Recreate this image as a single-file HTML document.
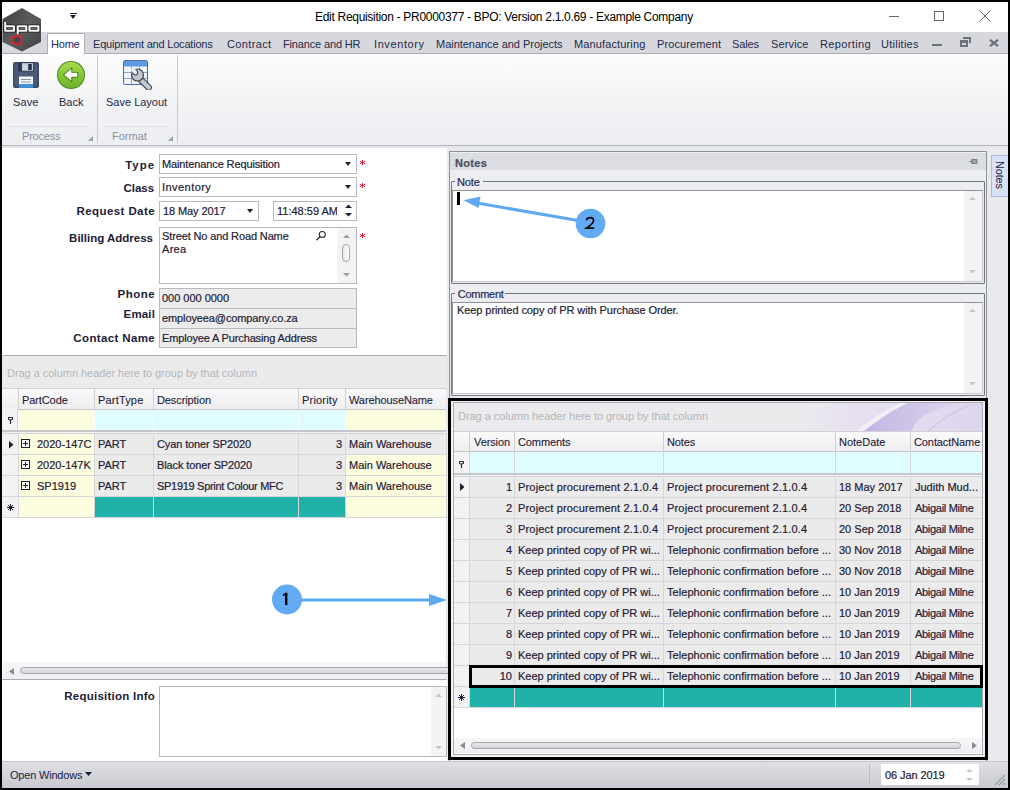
<!DOCTYPE html>
<html><head><meta charset="utf-8">
<style>
*{margin:0;padding:0;box-sizing:border-box}
html,body{width:1010px;height:790px;overflow:hidden;background:#000}
body{position:relative;font-family:"Liberation Sans",sans-serif;font-size:11px;color:#1e2034}
.a{position:absolute}
.t{position:absolute;white-space:nowrap;line-height:1;-webkit-text-stroke:0.2px}
.seg{font-size:11px;letter-spacing:-0.2px;color:#1e2a4a;-webkit-text-stroke:0}
.ns{-webkit-text-stroke:0}
.lbl{position:absolute;white-space:nowrap;line-height:1;font-weight:bold;font-size:11.5px;text-align:right;color:#1c2036}
.inp{position:absolute;background:#fff;border:1px solid #b7b9be}
.inp.ro{background:#ececed}
.itx{position:absolute;white-space:nowrap;line-height:1;font-size:11px;color:#1e2034;-webkit-text-stroke:0.2px}
.dd{position:absolute;width:0;height:0;border-left:3.5px solid transparent;border-right:3.5px solid transparent;border-top:4px solid #1e2034}
.req{position:absolute}
.gc{position:absolute;border-right:1px solid #d4d5d8;border-bottom:1px solid #d4d5d8}
.hd{position:absolute;white-space:nowrap;line-height:1;font-size:11px;letter-spacing:-0.1px;color:#1e2034;-webkit-text-stroke:0.1px}
</style></head><body>
<div class="a" style="left:2px;top:2px;width:1006px;height:786px;background:#e9eaed"></div>

<!-- ============ title bar ============ -->
<div class="a" style="left:2px;top:2px;width:1006px;height:30px;background:#fff"></div>
<div class="t ns" style="left:315px;top:11px;font-size:12px;letter-spacing:-0.3px;color:#000">Edit Requisition - PR0000377 - BPO: Version 2.1.0.69 - Example Company</div>
<div class="a" style="left:70px;top:13px;width:7px;height:1px;background:#1a1a3a"></div>
<div class="a" style="left:70px;top:15px;width:0;height:0;border-left:3.5px solid transparent;border-right:3.5px solid transparent;border-top:4px solid #1a1a3a"></div>
<div class="a" style="left:889px;top:16px;width:10px;height:1px;background:#666"></div>
<div class="a" style="left:934px;top:11px;width:10px;height:10px;border:1px solid #666"></div>
<svg class="a" style="left:979px;top:10px" width="12" height="12"><path d="M0.5 0.5L11.5 11.5M11.5 0.5L0.5 11.5" stroke="#666" stroke-width="1"/></svg>

<!-- ============ tab bar ============ -->
<div class="a" style="left:2px;top:32px;width:1006px;height:21px;background:#d7d8dd"></div>
<div class="a" style="left:2px;top:53px;width:1006px;height:1px;background:#a9abb1"></div>
<div class="a" style="left:47px;top:33px;width:38px;height:22px;background:#fff;border:1px solid #aeb0b6;border-bottom:none"></div>
<div class="t seg" style="left:51px;top:39px;letter-spacing:-0.2px;color:#20286a">Home</div>
<div class="t seg" style="left:93px;top:39px;letter-spacing:-0.2px">Equipment and Locations</div>
<div class="t seg" style="left:227px;top:39px;letter-spacing:0.37px">Contract</div>
<div class="t seg" style="left:283px;top:39px;letter-spacing:-0.15px">Finance and HR</div>
<div class="t seg" style="left:374px;top:39px;letter-spacing:0.6px">Inventory</div>
<div class="t seg" style="left:436px;top:39px;letter-spacing:-0.03px">Maintenance and Projects</div>
<div class="t seg" style="left:574px;top:39px;letter-spacing:0.13px">Manufacturing</div>
<div class="t seg" style="left:657px;top:39px;letter-spacing:0.1px">Procurement</div>
<div class="t seg" style="left:732px;top:39px;letter-spacing:-0.1px">Sales</div>
<div class="t seg" style="left:771px;top:39px;letter-spacing:0.13px">Service</div>
<div class="t seg" style="left:820px;top:39px;letter-spacing:0.36px">Reporting</div>
<div class="t seg" style="left:881px;top:39px;letter-spacing:0.25px">Utilities</div>
<div class="a" style="left:932px;top:43.5px;width:10px;height:2.5px;background:#6d7079"></div>
<svg class="a" style="left:960px;top:37px" width="11" height="10"><path d="M3 0h8v6h-2v-4h-6z M0 3h8v7h-8z" fill="#6d7079"/><path d="M2 6h4v2h-4z" fill="#d6d7dc"/></svg>
<svg class="a" style="left:989px;top:38.5px" width="10" height="8"><path d="M1 0.8L9 7.2M9 0.8L1 7.2" stroke="#6d7079" stroke-width="2.2"/></svg>

<!-- logo -->
<svg class="a" style="left:1px;top:7px" width="42" height="46" viewBox="0 0 42 46">
 <defs><linearGradient id="lg" x1="0" y1="0" x2="1" y2="1"><stop offset="0" stop-color="#3e3e3e"/><stop offset="0.5" stop-color="#5c5c5c"/><stop offset="1" stop-color="#424242"/></linearGradient></defs>
 <polygon points="21,1 40,12 40,35 21,44.5 1.5,35 1.5,12" fill="url(#lg)"/>
 <g fill="none" stroke="#1c1c1c" stroke-width="3.8" stroke-linejoin="round">
  <path d="M4.2 15V23.7H13V19.3H4.2"/><path d="M16.7 27.6V19.3H25.3V23.7H16.7"/><rect x="28.5" y="19.3" width="8.9" height="4.4"/>
 </g>
 <g fill="none" stroke="#fafafa" stroke-width="2.1" stroke-linejoin="round">
  <path d="M4.2 15V23.7H13V19.3H4.2"/><path d="M16.7 27.6V19.3H25.3V23.7H16.7"/><rect x="28.5" y="19.3" width="8.9" height="4.4"/>
 </g>
 <path d="M6.5 21.5h5M19 21.5h5M30.5 21.5h5" stroke="#777" stroke-width="0.8"/>
 <polygon points="16,28.2 20.3,30.6 20.3,35.4 16,37.8 11.7,35.4 11.7,30.6" fill="#3d4a4a" stroke="#e3202b" stroke-width="1.8"/>
</svg>
<!-- ============ ribbon ============ -->
<div class="a" style="left:2px;top:54px;width:1006px;height:91px;background:linear-gradient(#fdfdfe,#f1f2f4 60%,#eceef1)"></div>
<div class="a" style="left:2px;top:145px;width:1006px;height:1px;background:#b3b5bb"></div>
<div class="a" style="left:2px;top:146px;width:1006px;height:2px;background:#e6e7ea"></div>
<div class="a" style="left:97px;top:55px;width:1px;height:88px;background:#c9cbd0"></div>
<div class="a" style="left:177px;top:55px;width:1px;height:88px;background:#c9cbd0"></div>
<div class="a" style="left:7px;top:126px;width:82px;height:1px;background:#e0e2e6"></div>
<div class="a" style="left:104px;top:126px;width:66px;height:1px;background:#e0e2e6"></div>
<div class="t seg" style="left:13px;top:97px;letter-spacing:0.1px">Save</div>
<div class="t seg" style="left:59px;top:97px;letter-spacing:0px">Back</div>
<div class="t seg" style="left:106px;top:97px;letter-spacing:0px">Save Layout</div>
<div class="t seg" style="left:22px;top:131px;color:#8b91a0">Process</div>
<div class="t seg" style="left:112px;top:131px;color:#8b91a0;letter-spacing:0px">Format</div>
<svg class="a" style="left:88px;top:136px" width="5" height="5"><path d="M5 0V5H0z" fill="#9a9ea8"/></svg>
<svg class="a" style="left:168px;top:136px" width="5" height="5"><path d="M5 0V5H0z" fill="#9a9ea8"/></svg>

<!-- save icon -->
<svg class="a" style="left:13px;top:62px" width="26" height="26" viewBox="0 0 26 26">
 <rect x="0" y="0" width="26" height="26" rx="2" fill="#3b4863"/>
 <rect x="1.5" y="1.5" width="23" height="23" rx="1" fill="#4b5a78"/>
 <rect x="5" y="0" width="16" height="9.5" fill="#2f3a52"/>
 <rect x="9" y="1.2" width="11" height="7.5" fill="#c9d3e3"/>
 <rect x="15.2" y="2" width="3.6" height="6" fill="#243047"/>
 <rect x="6" y="14.5" width="14" height="11.5" fill="#f4f6fa"/>
 <rect x="8" y="17" width="10" height="1" fill="#8a96ad"/>
 <rect x="8" y="19.5" width="10" height="1" fill="#8a96ad"/>
 <rect x="6" y="22" width="14" height="4" fill="#3d8fd6"/>
</svg>
<!-- back icon -->
<svg class="a" style="left:57px;top:61px" width="28" height="28" viewBox="0 0 28 28">
 <defs><linearGradient id="gb" x1="0" y1="0" x2="0" y2="1"><stop offset="0" stop-color="#a9de52"/><stop offset="0.5" stop-color="#86c637"/><stop offset="1" stop-color="#6bb22a"/></linearGradient></defs>
 <circle cx="14" cy="14" r="14" fill="#4b861b"/>
 <circle cx="14" cy="14" r="13" fill="url(#gb)"/>
 <path d="M5.8 13.75L15.3 5.9V10.9H21.3V16.6H15.3V21.6z" fill="#3f7515"/>
 <path d="M7.2 13.75L14.3 7.8V11.8H20.3V15.7H14.3V19.7z" fill="#fff"/>
</svg>
<!-- save layout icon -->
<svg class="a" style="left:123px;top:60px" width="30" height="30" viewBox="0 0 30 30">
 <rect x="0.5" y="0.5" width="24" height="24" rx="1.5" fill="#eef4fb" stroke="#5866b0"/>
 <rect x="1" y="1" width="23" height="5.5" fill="#5b9ae2"/>
 <path d="M1 12.5h23M1 18.5h23M8.5 6.5v17.5M16.5 6.5v17.5" stroke="#8fa6d2" stroke-width="1"/>
 <path d="M17.5 19.5L25.8 27.6" stroke="#42474f" stroke-width="6.4" stroke-linecap="round"/>
 <path d="M17.5 19.5L25.8 27.6" stroke="#c3cad2" stroke-width="4.2" stroke-linecap="round"/>
 <circle cx="14.5" cy="15" r="6.6" fill="#42474f"/>
 <circle cx="14.5" cy="15" r="5.4" fill="#bfc6ce"/>
 <circle cx="12.3" cy="12.6" r="2.9" fill="#42474f"/>
 <circle cx="12.3" cy="12.6" r="1.9" fill="#e6eef8"/>
 <path d="M7.5 9.5L11 7.5L13.5 11L10 13z" fill="#e6eef8"/>
</svg>
<!-- ============ left form panel ============ -->
<div class="a" style="left:2px;top:148px;width:445px;height:613px;background:#fff"></div>
<div class="lbl" style="right:855px;top:160px;letter-spacing:0.95px">Type</div>
<div class="lbl" style="right:856px;top:182.5px;letter-spacing:-0.05px">Class</div>
<div class="lbl" style="right:855px;top:206.4px;letter-spacing:0.42px">Request Date</div>
<div class="lbl" style="right:857px;top:233.2px;letter-spacing:0px">Billing Address</div>
<div class="lbl" style="right:855px;top:289px;letter-spacing:0.45px">Phone</div>
<div class="lbl" style="right:855px;top:309.2px;letter-spacing:0.15px">Email</div>
<div class="lbl" style="right:855px;top:333px;letter-spacing:0.36px">Contact Name</div>

<div class="inp" style="left:159px;top:154px;width:198px;height:20px"></div>
<div class="itx" style="left:162px;top:158.6px;letter-spacing:-0.12px">Maintenance Requisition</div>
<div class="dd" style="left:345px;top:162px"></div>
<svg class="req" style="left:360px;top:160px" width="5" height="5" shape-rendering="crispEdges"><path d="M2 0h1v5h-1zM0 1h1v1h-1zM4 1h1v1h-1zM0 3h1v1h-1zM4 3h1v1h-1zM1 2h3v1h-3z" fill="#f0102a"/></svg>

<div class="inp" style="left:159px;top:177px;width:198px;height:20px"></div>
<div class="itx" style="left:162px;top:181.6px;letter-spacing:0.45px">Inventory</div>
<div class="dd" style="left:345px;top:185px"></div>
<svg class="req" style="left:360px;top:183px" width="5" height="5" shape-rendering="crispEdges"><path d="M2 0h1v5h-1zM0 1h1v1h-1zM4 1h1v1h-1zM0 3h1v1h-1zM4 3h1v1h-1zM1 2h3v1h-3z" fill="#f0102a"/></svg>

<div class="inp" style="left:159px;top:201px;width:100px;height:20px"></div>
<div class="itx" style="left:163px;top:206px;letter-spacing:-0.1px">18 May 2017</div>
<div class="dd" style="left:247px;top:209px"></div>
<div class="inp" style="left:273px;top:201px;width:84px;height:20px"></div>
<div class="itx" style="left:277px;top:206px;width:60px;overflow:hidden">11:48:59 AM</div>
<svg class="a" style="left:345px;top:204px" width="7" height="13"><path d="M0 4L3.5 0.5L7 4z M0 9L3.5 12.5L7 9z" fill="#1e2034"/></svg>

<div class="inp" style="left:159px;top:227px;width:198px;height:57px"></div>
<div class="itx" style="left:162px;top:229.5px;letter-spacing:-0.13px;line-height:13px">Street No and Road Name<br><span style="letter-spacing:0.3px">Area</span></div>
<svg class="a" style="left:315px;top:230px" width="12" height="11"><circle cx="7.3" cy="4.5" r="3" fill="none" stroke="#2a2a2a" stroke-width="1.1"/><path d="M5.1 6.8L1.3 10.3" stroke="#2a2a2a" stroke-width="1.2"/></svg>
<div class="a" style="left:337px;top:228px;width:19px;height:55px;background:#f3f3f4"></div>
<svg class="a" style="left:343px;top:234px" width="7" height="5"><path d="M0 4L3.5 0.5L7 4z" fill="#9a9ca3"/></svg>
<div class="a" style="left:342px;top:244px;width:8px;height:18px;border:1px solid #a6a8ad;border-radius:4px;background:linear-gradient(90deg,#e9eaec,#fdfdfd)"></div>
<svg class="a" style="left:343px;top:272px" width="7" height="5"><path d="M0 1L3.5 4.5L7 1z" fill="#9a9ca3"/></svg>
<svg class="req" style="left:360px;top:233px" width="5" height="5" shape-rendering="crispEdges"><path d="M2 0h1v5h-1zM0 1h1v1h-1zM4 1h1v1h-1zM0 3h1v1h-1zM4 3h1v1h-1zM1 2h3v1h-3z" fill="#f0102a"/></svg>

<div class="inp ro" style="left:159px;top:288px;width:198px;height:21px"></div>
<div class="itx" style="left:162px;top:293.3px;letter-spacing:-0.02px">000 000 0000</div>
<div class="inp ro" style="left:159px;top:308px;width:198px;height:21px"></div>
<div class="itx" style="left:162px;top:313px;letter-spacing:-0.11px">employeea@company.co.za</div>
<div class="inp ro" style="left:159px;top:328px;width:198px;height:20px"></div>
<div class="itx" style="left:162px;top:333px;letter-spacing:-0.14px">Employee A Purchasing Address</div>

<!-- ============ left grid ============ -->
<div class="a" style="left:2px;top:355px;width:445px;height:325px;border-top:1px solid #a9abb0;border-right:1px solid #e2e3e6;border-bottom:1px solid #a9abb0;background:#fff"></div>
<div class="a" style="left:2px;top:356px;width:444px;height:32px;background:#ebebec"></div>
<div class="t ns" style="left:7px;top:368px;color:#b4b6bb;letter-spacing:-0.04px">Drag a column header here to group by that column</div>
<!-- header -->
<div class="a" style="left:2px;top:388px;width:444px;height:22px;background:linear-gradient(#fafafb,#eeeef0);border-top:1px solid #d0d1d4;border-bottom:1px solid #c6c7ca"></div>
<div class="a" style="left:18px;top:389px;width:1px;height:20px;background:#cfd0d3"></div>
<div class="a" style="left:94px;top:389px;width:1px;height:20px;background:#cfd0d3"></div>
<div class="a" style="left:153px;top:389px;width:1px;height:20px;background:#cfd0d3"></div>
<div class="a" style="left:298px;top:389px;width:1px;height:20px;background:#cfd0d3"></div>
<div class="a" style="left:345px;top:389px;width:1px;height:20px;background:#cfd0d3"></div>
<div class="hd" style="left:22px;top:395px">PartCode</div>
<div class="hd" style="left:98px;top:395px;letter-spacing:0.18px">PartType</div>
<div class="hd" style="left:157px;top:395px">Description</div>
<div class="hd" style="left:302px;top:395px;letter-spacing:0.2px">Priority</div>
<div class="hd" style="left:349px;top:395px">WarehouseName</div>
<!-- filter row -->
<div class="a" style="left:2px;top:409px;width:16px;height:21px;background:#f3f3f4;border-right:1px solid #d4d5d8"></div>
<div class="a" style="left:19px;top:410px;width:75px;height:20px;background:#fdfde0"></div>
<div class="a" style="left:95px;top:410px;width:58px;height:20px;background:#dffdfe"></div>
<div class="a" style="left:154px;top:410px;width:144px;height:20px;background:#dffdfe"></div>
<div class="a" style="left:299px;top:410px;width:46px;height:20px;background:#dffdfe"></div>
<div class="a" style="left:346px;top:410px;width:100px;height:20px;background:#fdfde0"></div>
<svg class="a" style="left:8px;top:417px" width="5" height="7"><ellipse cx="2.5" cy="1.6" rx="2.2" ry="1.4" fill="#fff" stroke="#1e2034" stroke-width="1.1"/><path d="M2.5 3v4" stroke="#1e2034" stroke-width="1.1"/></svg>
<div class="a" style="left:2px;top:430px;width:444px;height:2px;background:#c6c7ca"></div>
<div class="a" style="left:2px;top:432px;width:444px;height:1px;background:#f3f3f4"></div>
<div class="a" style="left:2px;top:433px;width:444px;height:1px;background:#d3d4d7"></div>
<div class="a" style="left:2px;top:434px;width:16px;height:20px;background:#f3f3f4;"></div>
<div class="a" style="left:19px;top:434px;width:75px;height:20px;background:#fdfde0;"></div>
<div class="a" style="left:95px;top:434px;width:58px;height:20px;background:#ebebec;"></div>
<div class="a" style="left:154px;top:434px;width:144px;height:20px;background:#ebebec;"></div>
<div class="a" style="left:299px;top:434px;width:46px;height:20px;background:#ebebec;"></div>
<div class="a" style="left:346px;top:434px;width:100px;height:20px;background:#ebebec;"></div>
<div class="a" style="left:2px;top:454px;width:444px;height:1px;background:#d6d7da;"></div>
<div class="a" style="left:2px;top:455px;width:16px;height:20px;background:#f3f3f4;"></div>
<div class="a" style="left:19px;top:455px;width:75px;height:20px;background:#fdfde0;"></div>
<div class="a" style="left:95px;top:455px;width:58px;height:20px;background:#ebebec;"></div>
<div class="a" style="left:154px;top:455px;width:144px;height:20px;background:#ebebec;"></div>
<div class="a" style="left:299px;top:455px;width:46px;height:20px;background:#ebebec;"></div>
<div class="a" style="left:346px;top:455px;width:100px;height:20px;background:#fdfde0;"></div>
<div class="a" style="left:2px;top:475px;width:444px;height:1px;background:#d6d7da;"></div>
<div class="a" style="left:2px;top:476px;width:16px;height:20px;background:#f3f3f4;"></div>
<div class="a" style="left:19px;top:476px;width:75px;height:20px;background:#fdfde0;"></div>
<div class="a" style="left:95px;top:476px;width:58px;height:20px;background:#ebebec;"></div>
<div class="a" style="left:154px;top:476px;width:144px;height:20px;background:#ebebec;"></div>
<div class="a" style="left:299px;top:476px;width:46px;height:20px;background:#ebebec;"></div>
<div class="a" style="left:346px;top:476px;width:100px;height:20px;background:#fdfde0;"></div>
<div class="a" style="left:2px;top:496px;width:444px;height:1px;background:#d6d7da;"></div>
<div class="a" style="left:2px;top:497px;width:16px;height:20px;background:#f3f3f4;"></div>
<div class="a" style="left:19px;top:497px;width:75px;height:20px;background:#fdfde0;"></div>
<div class="a" style="left:95px;top:497px;width:58px;height:20px;background:#20b2aa;"></div>
<div class="a" style="left:154px;top:497px;width:144px;height:20px;background:#20b2aa;"></div>
<div class="a" style="left:299px;top:497px;width:46px;height:20px;background:#20b2aa;"></div>
<div class="a" style="left:346px;top:497px;width:100px;height:20px;background:#fdfde0;"></div>
<div class="a" style="left:2px;top:517px;width:444px;height:1px;background:#d6d7da;"></div>
<div class="a" style="left:18px;top:434px;width:1px;height:84px;background:#d6d7da;"></div>
<div class="a" style="left:94px;top:434px;width:1px;height:84px;background:#d6d7da;"></div>
<div class="a" style="left:153px;top:434px;width:1px;height:84px;background:#d6d7da;"></div>
<div class="a" style="left:298px;top:434px;width:1px;height:84px;background:#d6d7da;"></div>
<div class="a" style="left:345px;top:434px;width:1px;height:84px;background:#d6d7da;"></div>
<div class="a" style="left:446px;top:434px;width:1px;height:84px;background:#d6d7da;"></div>
<svg class="a" style="left:21px;top:439px" width="9" height="9"><rect x="0.5" y="0.5" width="8" height="8" fill="#fff" stroke="#1e2034"/><path d="M2 4.5h5M4.5 2v5" stroke="#1e2034"/></svg>
<div class="t" style="left:37px;top:438.7px;">2020-147C</div>
<div class="t" style="left:98px;top:438.7px;">PART</div>
<div class="t" style="left:157px;top:438.7px;letter-spacing:-0.12px">Cyan toner SP2020</div>
<div class="t" style="right:668px;top:438.7px;">3</div>
<div class="t" style="left:349px;top:438.7px;">Main Warehouse</div>
<svg class="a" style="left:21px;top:460px" width="9" height="9"><rect x="0.5" y="0.5" width="8" height="8" fill="#fff" stroke="#1e2034"/><path d="M2 4.5h5M4.5 2v5" stroke="#1e2034"/></svg>
<div class="t" style="left:37px;top:459.7px;">2020-147K</div>
<div class="t" style="left:98px;top:459.7px;">PART</div>
<div class="t" style="left:157px;top:459.7px;letter-spacing:-0.12px">Black toner SP2020</div>
<div class="t" style="right:668px;top:459.7px;">3</div>
<div class="t" style="left:349px;top:459.7px;">Main Warehouse</div>
<svg class="a" style="left:21px;top:481px" width="9" height="9"><rect x="0.5" y="0.5" width="8" height="8" fill="#fff" stroke="#1e2034"/><path d="M2 4.5h5M4.5 2v5" stroke="#1e2034"/></svg>
<div class="t" style="left:37px;top:480.7px;">SP1919</div>
<div class="t" style="left:98px;top:480.7px;">PART</div>
<div class="t" style="left:157px;top:480.7px;letter-spacing:-0.3px">SP1919 Sprint Colour MFC</div>
<div class="t" style="right:668px;top:480.7px;">3</div>
<div class="t" style="left:349px;top:480.7px;">Main Warehouse</div>
<svg class="a" style="left:9px;top:441px" width="4.5" height="7.5"><path d="M0 0L4.5 3.75L0 7.5z" fill="#1e2034"/></svg>
<svg class="a" style="left:6px;top:503px" width="9" height="9" shape-rendering="crispEdges"><path d="M4 1h1v1h-1zM4 2h1v1h-1zM4 3h1v1h-1zM4 4h1v1h-1zM4 5h1v1h-1zM4 6h1v1h-1zM4 7h1v1h-1zM1 4h1v1h-1zM2 4h1v1h-1zM3 4h1v1h-1zM5 4h1v1h-1zM6 4h1v1h-1zM7 4h1v1h-1zM2 2h1v1h-1zM3 3h1v1h-1zM5 5h1v1h-1zM6 6h1v1h-1zM6 2h1v1h-1zM5 3h1v1h-1zM3 5h1v1h-1zM2 6h1v1h-1z" fill="#1e2034"/></svg><!-- left grid scrollbar -->
<div class="a" style="left:3px;top:662px;width:443px;height:17px;background:linear-gradient(#f7f7f8,#eeeff1)"></div>
<svg class="a" style="left:9px;top:668px" width="5" height="7"><path d="M5 0L0 3.5L5 7z" fill="#8a8d96"/></svg>
<div class="a" style="left:20px;top:667px;width:440px;height:7px;border:1px solid #a5a7ad;border-radius:4px;background:linear-gradient(#e9eaed,#d2d4d9)"></div>
<!-- requisition info -->
<div class="lbl" style="right:855px;top:690.5px;letter-spacing:0.24px">Requisition Info</div>
<div class="inp" style="left:159px;top:686px;width:288px;height:71px;border-color:#b7b9be"></div>
<div class="a" style="left:431px;top:687px;width:15px;height:69px;background:#f3f3f4"></div>
<svg class="a" style="left:435px;top:693px" width="7" height="5"><path d="M0 4L3.5 0.5L7 4z" fill="#c5c7cc"/></svg>
<svg class="a" style="left:435px;top:745px" width="7" height="5"><path d="M0 1L3.5 4.5L7 1z" fill="#c5c7cc"/></svg>

<!-- ============ notes dock panel ============ -->
<div class="a" style="left:449px;top:151px;width:538px;height:610px;background:#ecedf0;border:1px solid #8f9298;border-bottom:none"></div>
<div class="a" style="left:450px;top:152px;width:536px;height:19px;background:#dcdde1;border-top:1px solid #eceef0;border-bottom:1px solid #eff0f2"></div>
<div class="t" style="left:455px;top:157.5px;font-weight:bold;font-size:11px;letter-spacing:0.3px;color:#4a5060">Notes</div>
<svg class="a" style="left:969px;top:158px" width="9" height="7"><path d="M0 3.5h3M3 1v5M3 1.5h5v4h-5z" stroke="#7b7f88" fill="#9da1a9" stroke-width="1"/></svg>

<!-- Note group -->
<div class="a" style="left:451px;top:181px;width:534px;height:103px;border:1px solid #75787e;border-radius:1px"></div>
<div class="a" style="left:455px;top:176px;width:28px;height:10px;background:#ecedf0"></div>
<div class="t" style="left:457px;top:177.3px;letter-spacing:-0.1px;color:#1e2a5a">Note</div>
<div class="a" style="left:452px;top:190px;width:531px;height:92px;background:#fff;border:1px solid #8f9298;border-right-color:#c9cbcf;border-bottom-color:#c9cbcf"></div>
<div class="a" style="left:964px;top:191px;width:18px;height:90px;background:#f3f3f4"></div>
<svg class="a" style="left:969px;top:196px" width="7" height="5"><path d="M0 4L3.5 0.5L7 4z" fill="#c5c7cc"/></svg>
<svg class="a" style="left:969px;top:269px" width="7" height="5"><path d="M0 1L3.5 4.5L7 1z" fill="#c5c7cc"/></svg>
<div class="a" style="left:457px;top:192px;width:3px;height:13px;background:#000"></div>

<!-- Comment group -->
<div class="a" style="left:451px;top:293px;width:534px;height:103px;border:1px solid #75787e;border-radius:1px"></div>
<div class="a" style="left:455px;top:288px;width:50px;height:10px;background:#ecedf0"></div>
<div class="t" style="left:457.8px;top:289px;letter-spacing:-0.28px;color:#1e2a5a">Comment</div>
<div class="a" style="left:452px;top:302px;width:531px;height:92px;background:#fff;border:1px solid #8f9298;border-right-color:#c9cbcf;border-bottom-color:#c9cbcf"></div>
<div class="t" style="left:457px;top:305.3px;letter-spacing:-0.08px">Keep printed copy of PR with Purchase Order.</div>
<div class="a" style="left:964px;top:303px;width:18px;height:90px;background:#f3f3f4"></div>
<svg class="a" style="left:969px;top:308px" width="7" height="5"><path d="M0 4L3.5 0.5L7 4z" fill="#c5c7cc"/></svg>
<svg class="a" style="left:969px;top:381px" width="7" height="5"><path d="M0 1L3.5 4.5L7 1z" fill="#c5c7cc"/></svg>

<!-- right side dock tab strip -->
<div class="a" style="left:988px;top:147px;width:20px;height:614px;background:#e9eaed"></div>
<div class="a" style="left:991px;top:155px;width:17px;height:42px;background:#d9e1f5;border:1px solid #b3bbd2;border-right:none"></div>
<div class="t ns" style="left:1005px;top:160.5px;transform-origin:0 0;transform:rotate(90deg);color:#1e2240;letter-spacing:-0.2px">Notes</div>
<div class="a" style="left:451px;top:401px;width:534px;height:356px;background:#f4f4f6;"></div>
<div class="a" style="left:453px;top:402px;width:530px;height:353px;background:#fff;border:1px solid #a9abb0"></div>
<div class="a" style="left:454px;top:403px;width:528px;height:28px;background:#ebebed;"></div>
<svg class="a" style="left:800px;top:403px" width="182" height="28" viewBox="0 0 182 28">
<defs><linearGradient id="pg" x1="0" y1="0" x2="1" y2="0"><stop offset="0" stop-color="#ebebed"/><stop offset="0.3" stop-color="#e7e0f0"/><stop offset="1" stop-color="#ddd5ee"/></linearGradient>
<linearGradient id="pd" x1="0" y1="0" x2="1" y2="0"><stop offset="0" stop-color="#c3b5e3"/><stop offset="1" stop-color="#ddd5ee"/></linearGradient></defs>
<rect x="0" y="0" width="182" height="28" fill="url(#pg)"/>
<path d="M56 28C72 16 86 6 100 0H108C94 6 80 16 64 28z" fill="#f2f0f6"/>
<path d="M64 28C80 16 94 6 108 0H160C130 6 115 16 112 28z" fill="url(#pd)"/>
<path d="M128 28C142 16 154 8 170 2" stroke="#cdc2e8" stroke-width="1.2" fill="none"/>
</svg>
<div class="t" style="left:458px;top:411px;color:#b4b6bb;letter-spacing:-0.04px;-webkit-text-stroke:0">Drag a column header here to group by that column</div>
<div class="a" style="left:454px;top:431px;width:528px;height:21px;background:linear-gradient(#fafafb,#eeeef0);border-top:1px solid #d0d1d4;border-bottom:1px solid #c6c7ca"></div>
<div class="a" style="left:469px;top:432px;width:1px;height:20px;background:#cfd0d3;"></div>
<div class="a" style="left:514px;top:432px;width:1px;height:20px;background:#cfd0d3;"></div>
<div class="a" style="left:663px;top:432px;width:1px;height:20px;background:#cfd0d3;"></div>
<div class="a" style="left:835px;top:432px;width:1px;height:20px;background:#cfd0d3;"></div>
<div class="a" style="left:910px;top:432px;width:1px;height:20px;background:#cfd0d3;"></div>
<div class="hd" style="left:474px;top:437px">Version</div>
<div class="hd" style="left:518px;top:437px">Comments</div>
<div class="hd" style="left:667px;top:437px">Notes</div>
<div class="hd" style="left:839px;top:437px;letter-spacing:0px">NoteDate</div>
<div class="hd" style="left:914px;top:437px">ContactName</div>
<div class="a" style="left:454px;top:452px;width:15px;height:22px;background:#f3f3f4;"></div>
<div class="a" style="left:469px;top:452px;width:1px;height:22px;background:#d6d7da;"></div>
<div class="a" style="left:470px;top:452px;width:44px;height:22px;background:#dffdfe;"></div>
<div class="a" style="left:514px;top:452px;width:1px;height:22px;background:#d6d7da;"></div>
<div class="a" style="left:515px;top:452px;width:148px;height:22px;background:#dffdfe;"></div>
<div class="a" style="left:663px;top:452px;width:1px;height:22px;background:#d6d7da;"></div>
<div class="a" style="left:664px;top:452px;width:171px;height:22px;background:#dffdfe;"></div>
<div class="a" style="left:835px;top:452px;width:1px;height:22px;background:#d6d7da;"></div>
<div class="a" style="left:836px;top:452px;width:74px;height:22px;background:#dffdfe;"></div>
<div class="a" style="left:910px;top:452px;width:1px;height:22px;background:#d6d7da;"></div>
<div class="a" style="left:911px;top:452px;width:71px;height:22px;background:#dffdfe;"></div>
<svg class="a" style="left:459px;top:461px" width="5" height="7"><ellipse cx="2.5" cy="1.6" rx="2.2" ry="1.4" fill="#fff" stroke="#1e2034" stroke-width="1.1"/><path d="M2.5 3v4" stroke="#1e2034" stroke-width="1.1"/></svg>
<div class="a" style="left:454px;top:473px;width:528px;height:2px;background:#c6c7ca;"></div>
<div class="a" style="left:454px;top:475px;width:528px;height:1px;background:#f3f3f4;"></div>
<div class="a" style="left:454px;top:476px;width:528px;height:1px;background:#d3d4d7;"></div>
<div class="a" style="left:454px;top:477px;width:15px;height:20px;background:#f3f3f4;"></div>
<div class="a" style="left:470px;top:477px;width:44px;height:20px;background:#ebebec;"></div>
<div class="a" style="left:515px;top:477px;width:148px;height:20px;background:#ebebec;"></div>
<div class="a" style="left:664px;top:477px;width:171px;height:20px;background:#ebebec;"></div>
<div class="a" style="left:836px;top:477px;width:74px;height:20px;background:#ebebec;"></div>
<div class="a" style="left:911px;top:477px;width:71px;height:20px;background:#ebebec;"></div>
<div class="a" style="left:454px;top:497px;width:528px;height:1px;background:#d6d7da;"></div>
<div class="a" style="left:454px;top:498px;width:15px;height:20px;background:#f3f3f4;"></div>
<div class="a" style="left:470px;top:498px;width:44px;height:20px;background:#ebebec;"></div>
<div class="a" style="left:515px;top:498px;width:148px;height:20px;background:#ebebec;"></div>
<div class="a" style="left:664px;top:498px;width:171px;height:20px;background:#ebebec;"></div>
<div class="a" style="left:836px;top:498px;width:74px;height:20px;background:#ebebec;"></div>
<div class="a" style="left:911px;top:498px;width:71px;height:20px;background:#ebebec;"></div>
<div class="a" style="left:454px;top:518px;width:528px;height:1px;background:#d6d7da;"></div>
<div class="a" style="left:454px;top:519px;width:15px;height:20px;background:#f3f3f4;"></div>
<div class="a" style="left:470px;top:519px;width:44px;height:20px;background:#ebebec;"></div>
<div class="a" style="left:515px;top:519px;width:148px;height:20px;background:#ebebec;"></div>
<div class="a" style="left:664px;top:519px;width:171px;height:20px;background:#ebebec;"></div>
<div class="a" style="left:836px;top:519px;width:74px;height:20px;background:#ebebec;"></div>
<div class="a" style="left:911px;top:519px;width:71px;height:20px;background:#ebebec;"></div>
<div class="a" style="left:454px;top:539px;width:528px;height:1px;background:#d6d7da;"></div>
<div class="a" style="left:454px;top:540px;width:15px;height:20px;background:#f3f3f4;"></div>
<div class="a" style="left:470px;top:540px;width:44px;height:20px;background:#ebebec;"></div>
<div class="a" style="left:515px;top:540px;width:148px;height:20px;background:#ebebec;"></div>
<div class="a" style="left:664px;top:540px;width:171px;height:20px;background:#ebebec;"></div>
<div class="a" style="left:836px;top:540px;width:74px;height:20px;background:#ebebec;"></div>
<div class="a" style="left:911px;top:540px;width:71px;height:20px;background:#ebebec;"></div>
<div class="a" style="left:454px;top:560px;width:528px;height:1px;background:#d6d7da;"></div>
<div class="a" style="left:454px;top:561px;width:15px;height:20px;background:#f3f3f4;"></div>
<div class="a" style="left:470px;top:561px;width:44px;height:20px;background:#ebebec;"></div>
<div class="a" style="left:515px;top:561px;width:148px;height:20px;background:#ebebec;"></div>
<div class="a" style="left:664px;top:561px;width:171px;height:20px;background:#ebebec;"></div>
<div class="a" style="left:836px;top:561px;width:74px;height:20px;background:#ebebec;"></div>
<div class="a" style="left:911px;top:561px;width:71px;height:20px;background:#ebebec;"></div>
<div class="a" style="left:454px;top:581px;width:528px;height:1px;background:#d6d7da;"></div>
<div class="a" style="left:454px;top:582px;width:15px;height:20px;background:#f3f3f4;"></div>
<div class="a" style="left:470px;top:582px;width:44px;height:20px;background:#ebebec;"></div>
<div class="a" style="left:515px;top:582px;width:148px;height:20px;background:#ebebec;"></div>
<div class="a" style="left:664px;top:582px;width:171px;height:20px;background:#ebebec;"></div>
<div class="a" style="left:836px;top:582px;width:74px;height:20px;background:#ebebec;"></div>
<div class="a" style="left:911px;top:582px;width:71px;height:20px;background:#ebebec;"></div>
<div class="a" style="left:454px;top:602px;width:528px;height:1px;background:#d6d7da;"></div>
<div class="a" style="left:454px;top:603px;width:15px;height:20px;background:#f3f3f4;"></div>
<div class="a" style="left:470px;top:603px;width:44px;height:20px;background:#ebebec;"></div>
<div class="a" style="left:515px;top:603px;width:148px;height:20px;background:#ebebec;"></div>
<div class="a" style="left:664px;top:603px;width:171px;height:20px;background:#ebebec;"></div>
<div class="a" style="left:836px;top:603px;width:74px;height:20px;background:#ebebec;"></div>
<div class="a" style="left:911px;top:603px;width:71px;height:20px;background:#ebebec;"></div>
<div class="a" style="left:454px;top:623px;width:528px;height:1px;background:#d6d7da;"></div>
<div class="a" style="left:454px;top:624px;width:15px;height:20px;background:#f3f3f4;"></div>
<div class="a" style="left:470px;top:624px;width:44px;height:20px;background:#ebebec;"></div>
<div class="a" style="left:515px;top:624px;width:148px;height:20px;background:#ebebec;"></div>
<div class="a" style="left:664px;top:624px;width:171px;height:20px;background:#ebebec;"></div>
<div class="a" style="left:836px;top:624px;width:74px;height:20px;background:#ebebec;"></div>
<div class="a" style="left:911px;top:624px;width:71px;height:20px;background:#ebebec;"></div>
<div class="a" style="left:454px;top:644px;width:528px;height:1px;background:#d6d7da;"></div>
<div class="a" style="left:454px;top:645px;width:15px;height:20px;background:#f3f3f4;"></div>
<div class="a" style="left:470px;top:645px;width:44px;height:20px;background:#ebebec;"></div>
<div class="a" style="left:515px;top:645px;width:148px;height:20px;background:#ebebec;"></div>
<div class="a" style="left:664px;top:645px;width:171px;height:20px;background:#ebebec;"></div>
<div class="a" style="left:836px;top:645px;width:74px;height:20px;background:#ebebec;"></div>
<div class="a" style="left:911px;top:645px;width:71px;height:20px;background:#ebebec;"></div>
<div class="a" style="left:454px;top:665px;width:528px;height:1px;background:#d6d7da;"></div>
<div class="a" style="left:454px;top:666px;width:15px;height:20px;background:#f3f3f4;"></div>
<div class="a" style="left:470px;top:666px;width:44px;height:20px;background:#ebebec;"></div>
<div class="a" style="left:515px;top:666px;width:148px;height:20px;background:#ebebec;"></div>
<div class="a" style="left:664px;top:666px;width:171px;height:20px;background:#ebebec;"></div>
<div class="a" style="left:836px;top:666px;width:74px;height:20px;background:#ebebec;"></div>
<div class="a" style="left:911px;top:666px;width:71px;height:20px;background:#ebebec;"></div>
<div class="a" style="left:454px;top:686px;width:528px;height:1px;background:#d6d7da;"></div>
<div class="a" style="left:454px;top:687px;width:15px;height:20px;background:#f3f3f4;"></div>
<div class="a" style="left:470px;top:687px;width:44px;height:20px;background:#20b2aa;"></div>
<div class="a" style="left:515px;top:687px;width:148px;height:20px;background:#20b2aa;"></div>
<div class="a" style="left:664px;top:687px;width:171px;height:20px;background:#20b2aa;"></div>
<div class="a" style="left:836px;top:687px;width:74px;height:20px;background:#20b2aa;"></div>
<div class="a" style="left:911px;top:687px;width:71px;height:20px;background:#20b2aa;"></div>
<div class="a" style="left:454px;top:707px;width:528px;height:1px;background:#d6d7da;"></div>
<div class="a" style="left:469px;top:477px;width:1px;height:231px;background:#d6d7da;"></div>
<div class="a" style="left:514px;top:477px;width:1px;height:231px;background:#d6d7da;"></div>
<div class="a" style="left:663px;top:477px;width:1px;height:231px;background:#d6d7da;"></div>
<div class="a" style="left:835px;top:477px;width:1px;height:231px;background:#d6d7da;"></div>
<div class="a" style="left:910px;top:477px;width:1px;height:231px;background:#d6d7da;"></div>
<div class="t" style="right:498px;top:482px;">1</div>
<div class="t" style="left:518px;top:482px;letter-spacing:0.17px">Project procurement 2.1.0.4</div>
<div class="t" style="left:667px;top:482px;letter-spacing:0.17px">Project procurement 2.1.0.4</div>
<div class="t" style="left:839px;top:482px;">18 May 2017</div>
<div class="t" style="left:915px;top:482px;">Judith Mud...</div>
<div class="t" style="right:498px;top:503px;">2</div>
<div class="t" style="left:518px;top:503px;letter-spacing:0.17px">Project procurement 2.1.0.4</div>
<div class="t" style="left:667px;top:503px;letter-spacing:0.17px">Project procurement 2.1.0.4</div>
<div class="t" style="left:839px;top:503px;">20 Sep 2018</div>
<div class="t" style="left:915px;top:503px;letter-spacing:-0.3px">Abigail Milne</div>
<div class="t" style="right:498px;top:524px;">3</div>
<div class="t" style="left:518px;top:524px;letter-spacing:0.17px">Project procurement 2.1.0.4</div>
<div class="t" style="left:667px;top:524px;letter-spacing:0.17px">Project procurement 2.1.0.4</div>
<div class="t" style="left:839px;top:524px;">20 Sep 2018</div>
<div class="t" style="left:915px;top:524px;letter-spacing:-0.3px">Abigail Milne</div>
<div class="t" style="right:498px;top:545px;">4</div>
<div class="t" style="left:518px;top:545px;">Keep printed copy of PR wi...</div>
<div class="t" style="left:667px;top:545px;letter-spacing:0.06px">Telephonic confirmation before ...</div>
<div class="t" style="left:839px;top:545px;">30 Nov 2018</div>
<div class="t" style="left:915px;top:545px;letter-spacing:-0.3px">Abigail Milne</div>
<div class="t" style="right:498px;top:566px;">5</div>
<div class="t" style="left:518px;top:566px;">Keep printed copy of PR wi...</div>
<div class="t" style="left:667px;top:566px;letter-spacing:0.06px">Telephonic confirmation before ...</div>
<div class="t" style="left:839px;top:566px;">30 Nov 2018</div>
<div class="t" style="left:915px;top:566px;letter-spacing:-0.3px">Abigail Milne</div>
<div class="t" style="right:498px;top:587px;">6</div>
<div class="t" style="left:518px;top:587px;">Keep printed copy of PR wi...</div>
<div class="t" style="left:667px;top:587px;letter-spacing:0.06px">Telephonic confirmation before ...</div>
<div class="t" style="left:839px;top:587px;">10 Jan 2019</div>
<div class="t" style="left:915px;top:587px;letter-spacing:-0.3px">Abigail Milne</div>
<div class="t" style="right:498px;top:608px;">7</div>
<div class="t" style="left:518px;top:608px;">Keep printed copy of PR wi...</div>
<div class="t" style="left:667px;top:608px;letter-spacing:0.06px">Telephonic confirmation before ...</div>
<div class="t" style="left:839px;top:608px;">10 Jan 2019</div>
<div class="t" style="left:915px;top:608px;letter-spacing:-0.3px">Abigail Milne</div>
<div class="t" style="right:498px;top:629px;">8</div>
<div class="t" style="left:518px;top:629px;">Keep printed copy of PR wi...</div>
<div class="t" style="left:667px;top:629px;letter-spacing:0.06px">Telephonic confirmation before ...</div>
<div class="t" style="left:839px;top:629px;">10 Jan 2019</div>
<div class="t" style="left:915px;top:629px;letter-spacing:-0.3px">Abigail Milne</div>
<div class="t" style="right:498px;top:650px;">9</div>
<div class="t" style="left:518px;top:650px;">Keep printed copy of PR wi...</div>
<div class="t" style="left:667px;top:650px;letter-spacing:0.06px">Telephonic confirmation before ...</div>
<div class="t" style="left:839px;top:650px;">10 Jan 2019</div>
<div class="t" style="left:915px;top:650px;letter-spacing:-0.3px">Abigail Milne</div>
<div class="t" style="right:498px;top:671px;">10</div>
<div class="t" style="left:518px;top:671px;">Keep printed copy of PR wi...</div>
<div class="t" style="left:667px;top:671px;letter-spacing:0.06px">Telephonic confirmation before ...</div>
<div class="t" style="left:839px;top:671px;">10 Jan 2019</div>
<div class="t" style="left:915px;top:671px;letter-spacing:-0.3px">Abigail Milne</div>
<svg class="a" style="left:459.5px;top:483px" width="4.5" height="8"><path d="M0 0L4.5 4L0 8z" fill="#1e2034"/></svg>
<svg class="a" style="left:457px;top:693px" width="9" height="9" shape-rendering="crispEdges"><path d="M4 1h1v1h-1zM4 2h1v1h-1zM4 3h1v1h-1zM4 4h1v1h-1zM4 5h1v1h-1zM4 6h1v1h-1zM4 7h1v1h-1zM1 4h1v1h-1zM2 4h1v1h-1zM3 4h1v1h-1zM5 4h1v1h-1zM6 4h1v1h-1zM7 4h1v1h-1zM2 2h1v1h-1zM3 3h1v1h-1zM5 5h1v1h-1zM6 6h1v1h-1zM6 2h1v1h-1zM5 3h1v1h-1zM3 5h1v1h-1zM2 6h1v1h-1z" fill="#1e2034"/></svg>
<div class="a" style="left:454px;top:738px;width:528px;height:15px;background:linear-gradient(#f7f7f8,#eeeff1);"></div>
<svg class="a" style="left:460px;top:742px" width="5" height="7"><path d="M5 0L0 3.5L5 7z" fill="#8a8d96"/></svg>
<svg class="a" style="left:972px;top:742px" width="5" height="7"><path d="M0 0L5 3.5L0 7z" fill="#8a8d96"/></svg>
<div class="a" style="left:471px;top:742px;width:490px;height:7px;background:linear-gradient(#e9eaed,#d2d4d9);border:1px solid #a5a7ad;border-radius:4px"></div>
<div class="a" style="left:469px;top:665px;width:514px;height:23px;background:transparent;border:3px solid #000"></div>
<div class="a" style="left:448px;top:398px;width:540px;height:362px;background:transparent;border:3px solid #000"></div><!-- ============ status bar ============ -->
<div class="a" style="left:2px;top:761px;width:1006px;height:27px;background:linear-gradient(#e0e1e5,#c9cacf)"></div>
<div class="a" style="left:2px;top:761px;width:1006px;height:1px;background:#c3c5ca"></div>
<div class="t seg" style="left:10px;top:770px;color:#1a1c44">Open Windows</div>
<svg class="a" style="left:85px;top:772px" width="7" height="4"><path d="M0 0h7L3.5 4z" fill="#1a1a3a"/></svg>
<div class="a" style="left:869px;top:764px;width:1px;height:21px;background:#b9bbc0"></div>
<div class="a" style="left:881px;top:764px;width:98px;height:21px;background:#fff"></div>
<div class="t" style="left:885px;top:770px;letter-spacing:-0.1px">06 Jan 2019</div>
<svg class="a" style="left:966px;top:768px" width="7" height="14"><path d="M0 4L3.5 1L7 4z M0 10L3.5 13L7 10z" fill="#c5c7cc"/></svg>
<svg class="a" style="left:992px;top:772px" width="14" height="13"><path d="M13 3L3 13M13 7L7 13M13 11L11 13" stroke="#9a9ca3" stroke-width="1.2"/></svg>

<!-- ============ annotations ============ -->
<svg class="a" style="left:0;top:0" width="1010" height="790">
 <line x1="300" y1="600" x2="432" y2="600" stroke="#5fa8f2" stroke-width="3"/>
 <polygon points="447,600 429,594 429,606" fill="#5fa8f2"/>
 <circle cx="287" cy="599.5" r="15" fill="#62aaf4"/>
 <line x1="578" y1="220.5" x2="477" y2="203" stroke="#5fa8f2" stroke-width="3"/>
 <polygon points="463.5,200.2 480.5,196.5 478.5,208" fill="#5fa8f2"/>
 <circle cx="590.5" cy="223.5" r="14.8" fill="#62aaf4"/>
 <rect x="285" y="592.8" width="2.4" height="12.2" fill="#000"/>
 <path d="M283 595.4L286 593.3" stroke="#000" stroke-width="1.6"/>
 <path d="M586.4 220.3C586.9 218.3 588.4 217.6 590.2 217.6C592.4 217.6 593.6 218.9 593.6 220.6C593.6 222.4 592.6 223.5 590.8 224.8L586.3 228.1H594.2" stroke="#000" stroke-width="1.6" fill="none"/>
</svg>

</body></html>
